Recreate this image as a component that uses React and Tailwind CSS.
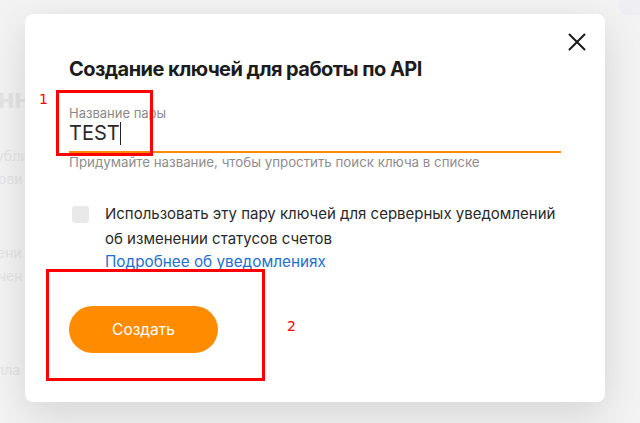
import React from "react";

export default function App() {
  const font = { fontFamily: "Inter, 'Noto Sans', sans-serif" };
  return (
    <div className="relative w-[640px] h-[423px] overflow-hidden bg-[#f3f3f3]" style={font}>
      {/* faded page behind overlay */}
      <div className="absolute inset-0 text-[#e4e4e4] select-none">
        <div className="flex flex-col pt-[86px]">
          <div className="text-[26px] font-bold leading-[26px] ml-[-2px]">нн</div>
          <div className="mt-[32px] text-[14px] leading-[23px] ml-[-4px]">убли</div>
          <div className="text-[14px] leading-[23px] ml-[-2px]">ови</div>
          <div className="mt-[51px] text-[14px] leading-[23px] ml-[-3px]">ени</div>
          <div className="text-[14px] leading-[23px] ml-[-2px]">чен</div>
          <div className="mt-[71px] text-[14px] leading-[23px] ml-[-4px]">пла</div>
        </div>
        <div className="absolute left-[619px] top-[-8px] w-[40px] h-[23px] rounded-[8px] bg-[#efeef3]" />
      </div>

      <div className="relative pt-[14px] pl-[25px]">
        <div className="relative w-[580px] h-[388px] bg-white rounded-[8px] shadow-[0_12px_40px_rgba(0,0,0,0.13)] px-[44px] pt-[41px]">
          <button className="absolute right-[19px] top-[19px] w-[18px] h-[18px] flex items-center justify-center">
            <svg width="18" height="18" viewBox="0 0 18 18" fill="none">
              <path d="M1.5 1.5 L16.5 16.5 M16.5 1.5 L1.5 16.5" stroke="#1a1a1a" strokeWidth="2" strokeLinecap="round" />
            </svg>
          </button>

          <h2 className="text-[20px] font-bold text-[#1c1c1c] leading-[28px] tracking-[-0.55px]">
            Создание ключей для работы по API
          </h2>

          <div className="mt-[22px] w-[492px]">
            <div className="text-[13px] text-[#8a8a8a] leading-[16px]">Название пары</div>
            <div className="flex items-end h-[24px] text-[20px] text-[#2a2a2a] leading-[24px]">
              TEST<span className="inline-block w-[1px] h-[23px] bg-[#222]" />
            </div>
            <div className="h-[2px] bg-[#ff8a00] mt-[6px]" />
            <div className="mt-[1px] text-[13.3px] text-[#8e8e8e] leading-[16px]">
              Придумайте название, чтобы упростить поиск ключа в списке
            </div>
          </div>

          <div className="mt-[32px] flex">
            <div className="w-[17px] h-[17px] rounded-[3px] bg-[#e9e9e9] ml-[3px] mt-[4px] shrink-0" />
            <div className="ml-[16px] text-[15px] text-[#2a2a2a] leading-[24.5px]">
              <div>Использовать эту пару ключей для серверных уведомлений</div>
              <div>об изменении статусов счетов</div>
              <div className="text-[#1f6fcf] leading-[22px] text-[15.3px]">Подробнее об уведомлениях</div>
            </div>
          </div>

          <button className="mt-[33px] w-[149px] h-[47px] rounded-full bg-[#ff8c00] text-white text-[15.5px] font-normal">
            Создать
          </button>
        </div>
      </div>

      {/* annotations */}
      <div className="absolute left-[56px] top-[90px] w-[97px] h-[66px] border-[3px] border-[#ff0000]" />
      <div className="absolute left-[39px] top-[92px] text-[14px] text-[#ff0000] leading-none" style={{ fontFamily: "'DejaVu Sans', sans-serif" }}>1</div>
      <div className="absolute left-[46px] top-[269px] w-[219px] h-[112px] border-[3px] border-[#ff0000]" />
      <div className="absolute left-[287px] top-[319px] text-[14px] text-[#ff0000] leading-none" style={{ fontFamily: "'DejaVu Sans', sans-serif" }}>2</div>
    </div>
  );
}
